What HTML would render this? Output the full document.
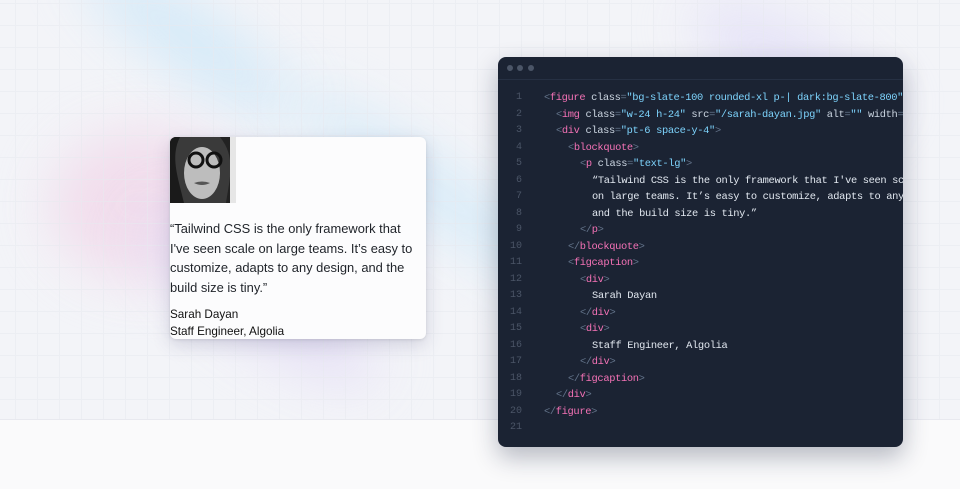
<!DOCTYPE html>
<html><head><style>
html,body{margin:0;width:960px;height:489px;overflow:hidden;background:#fafafb;font-family:"Liberation Sans",sans-serif}
.bg{position:absolute;left:0;top:0;width:960px;height:419px;background:#f3f4f8;overflow:hidden;border-bottom:1px solid #e8e9ef}
.grid{position:absolute;inset:0;background-image:linear-gradient(#e8eaf0 1px,transparent 1px),linear-gradient(90deg,#e8eaf0 1px,transparent 1px);background-size:22px 22px;background-position:15px 3px;opacity:.55}
.blob{position:absolute;filter:blur(28px);border-radius:50%}
.card{position:absolute;left:170px;top:137px;width:256px;height:202px;background:#fcfcfd;border-radius:6px;box-shadow:0 6px 18px rgba(60,60,110,.18),0 1px 3px rgba(0,0,0,.1);overflow:hidden}
.ph{position:absolute;left:0;top:0;width:66px;height:66px;background:#333;overflow:hidden}
.q{position:absolute;left:0;top:82px;width:250px;font-size:12.9px;line-height:19.5px;color:#1f2329}
.n{position:absolute;left:0;top:170px;font-size:11.7px;line-height:16.5px;color:#111}
.win{position:absolute;left:498px;top:57px;width:405px;height:390px;background:#1b2333;border-radius:8px;box-shadow:0 10px 25px rgba(20,30,60,.3);overflow:hidden}
.hd{height:22px;border-bottom:1px solid #263043}
.d{position:absolute;top:8px;width:6px;height:6px;border-radius:50%;background:#4b5567}
.code{position:absolute;left:46px;top:33px;font-family:"Liberation Mono",monospace;font-size:10.4px;letter-spacing:-0.35px;line-height:16.5px;color:#e2e8f0}
.code div{height:16.5px;white-space:pre}
.ln{position:absolute;left:0;top:33px;width:24px;text-align:right;font-family:"Liberation Mono",monospace;font-size:10px;line-height:16.5px;color:#4b5567}
.ln div{height:16.5px}
.t{color:#f472b6}.a{color:#cbd5e1}.s{color:#7dd3fc}.p{color:#64748b}
</style></head><body>
<div class="bg">
<div class="blob" style="left:60px;top:10px;width:260px;height:60px;background:#c9e6f8;transform:rotate(35deg);opacity:.8"></div>
<div class="blob" style="left:260px;top:170px;width:360px;height:50px;background:#d0e9f8;transform:rotate(35deg);opacity:.9"></div>
<div class="blob" style="left:50px;top:130px;width:190px;height:150px;background:#f1d5e8;opacity:.75"></div>
<div class="blob" style="left:120px;top:260px;width:280px;height:80px;background:#e3dcf5;transform:rotate(35deg);opacity:.8"></div>
<div class="blob" style="left:680px;top:30px;width:220px;height:70px;background:#e1ddf7;transform:rotate(30deg);opacity:.8"></div>
<div class="grid"></div>
</div>
<div class="card"><div class="ph">
<svg width="66" height="66" viewBox="0 0 66 66"><rect width="66" height="66" fill="#3a3a3a"/><ellipse cx="32" cy="36" rx="18" ry="26" fill="#bdbdbd"/><path d="M10 0C0 20 8 40 14 66H0V0Z" fill="#1a1a1a"/><path d="M50 0C66 20 60 40 56 66H66V0Z" fill="#222"/><circle cx="26" cy="23" r="7" fill="none" stroke="#111" stroke-width="3"/><circle cx="44" cy="23" r="7" fill="none" stroke="#111" stroke-width="3"/><path d="M24 46Q32 43 40 46Q32 50 24 46" fill="#555"/><rect x="60" y="0" width="6" height="66" fill="#e6e6e6"/></svg>
</div>
<div class="q">“Tailwind CSS is the only framework that I've seen scale on large teams. It’s easy to customize, adapts to any design, and the build size is tiny.”</div>
<div class="n">Sarah Dayan<br>Staff Engineer, Algolia</div></div>
<div class="win"><div class="hd"></div>
<div class="d" style="left:9px"></div><div class="d" style="left:19px"></div><div class="d" style="left:30px"></div>
<div class="ln"><div>1</div><div>2</div><div>3</div><div>4</div><div>5</div><div>6</div><div>7</div><div>8</div><div>9</div><div>10</div><div>11</div><div>12</div><div>13</div><div>14</div><div>15</div><div>16</div><div>17</div><div>18</div><div>19</div><div>20</div><div>21</div></div>
<div class="code"><div><span class="p">&lt;</span><span class="t">figure</span> <span class="a">class</span><span class="p">=</span><span class="s">"bg-slate-100 rounded-xl p-| dark:bg-slate-800"</span><span class="p">&gt;</span></div><div style="margin-left:12px"><span class="p">&lt;</span><span class="t">img</span> <span class="a">class</span><span class="p">=</span><span class="s">"w-24 h-24"</span> <span class="a">src</span><span class="p">=</span><span class="s">"/sarah-dayan.jpg"</span> <span class="a">alt</span><span class="p">=</span><span class="s">""</span> <span class="a">width</span><span class="p">=</span></div><div style="margin-left:12px"><span class="p">&lt;</span><span class="t">div</span> <span class="a">class</span><span class="p">=</span><span class="s">"pt-6 space-y-4"</span><span class="p">&gt;</span></div><div style="margin-left:24px"><span class="p">&lt;</span><span class="t">blockquote</span><span class="p">&gt;</span></div><div style="margin-left:36px"><span class="p">&lt;</span><span class="t">p</span> <span class="a">class</span><span class="p">=</span><span class="s">"text-lg"</span><span class="p">&gt;</span></div><div style="margin-left:48px">“Tailwind CSS is the only framework that I've seen sc</div><div style="margin-left:48px">on large teams. It’s easy to customize, adapts to any</div><div style="margin-left:48px">and the build size is tiny.”</div><div style="margin-left:36px"><span class="p">&lt;/</span><span class="t">p</span><span class="p">&gt;</span></div><div style="margin-left:24px"><span class="p">&lt;/</span><span class="t">blockquote</span><span class="p">&gt;</span></div><div style="margin-left:24px"><span class="p">&lt;</span><span class="t">figcaption</span><span class="p">&gt;</span></div><div style="margin-left:36px"><span class="p">&lt;</span><span class="t">div</span><span class="p">&gt;</span></div><div style="margin-left:48px">Sarah Dayan</div><div style="margin-left:36px"><span class="p">&lt;/</span><span class="t">div</span><span class="p">&gt;</span></div><div style="margin-left:36px"><span class="p">&lt;</span><span class="t">div</span><span class="p">&gt;</span></div><div style="margin-left:48px">Staff Engineer, Algolia</div><div style="margin-left:36px"><span class="p">&lt;/</span><span class="t">div</span><span class="p">&gt;</span></div><div style="margin-left:24px"><span class="p">&lt;/</span><span class="t">figcaption</span><span class="p">&gt;</span></div><div style="margin-left:12px"><span class="p">&lt;/</span><span class="t">div</span><span class="p">&gt;</span></div><div><span class="p">&lt;/</span><span class="t">figure</span><span class="p">&gt;</span></div></div></div>
</body></html>
